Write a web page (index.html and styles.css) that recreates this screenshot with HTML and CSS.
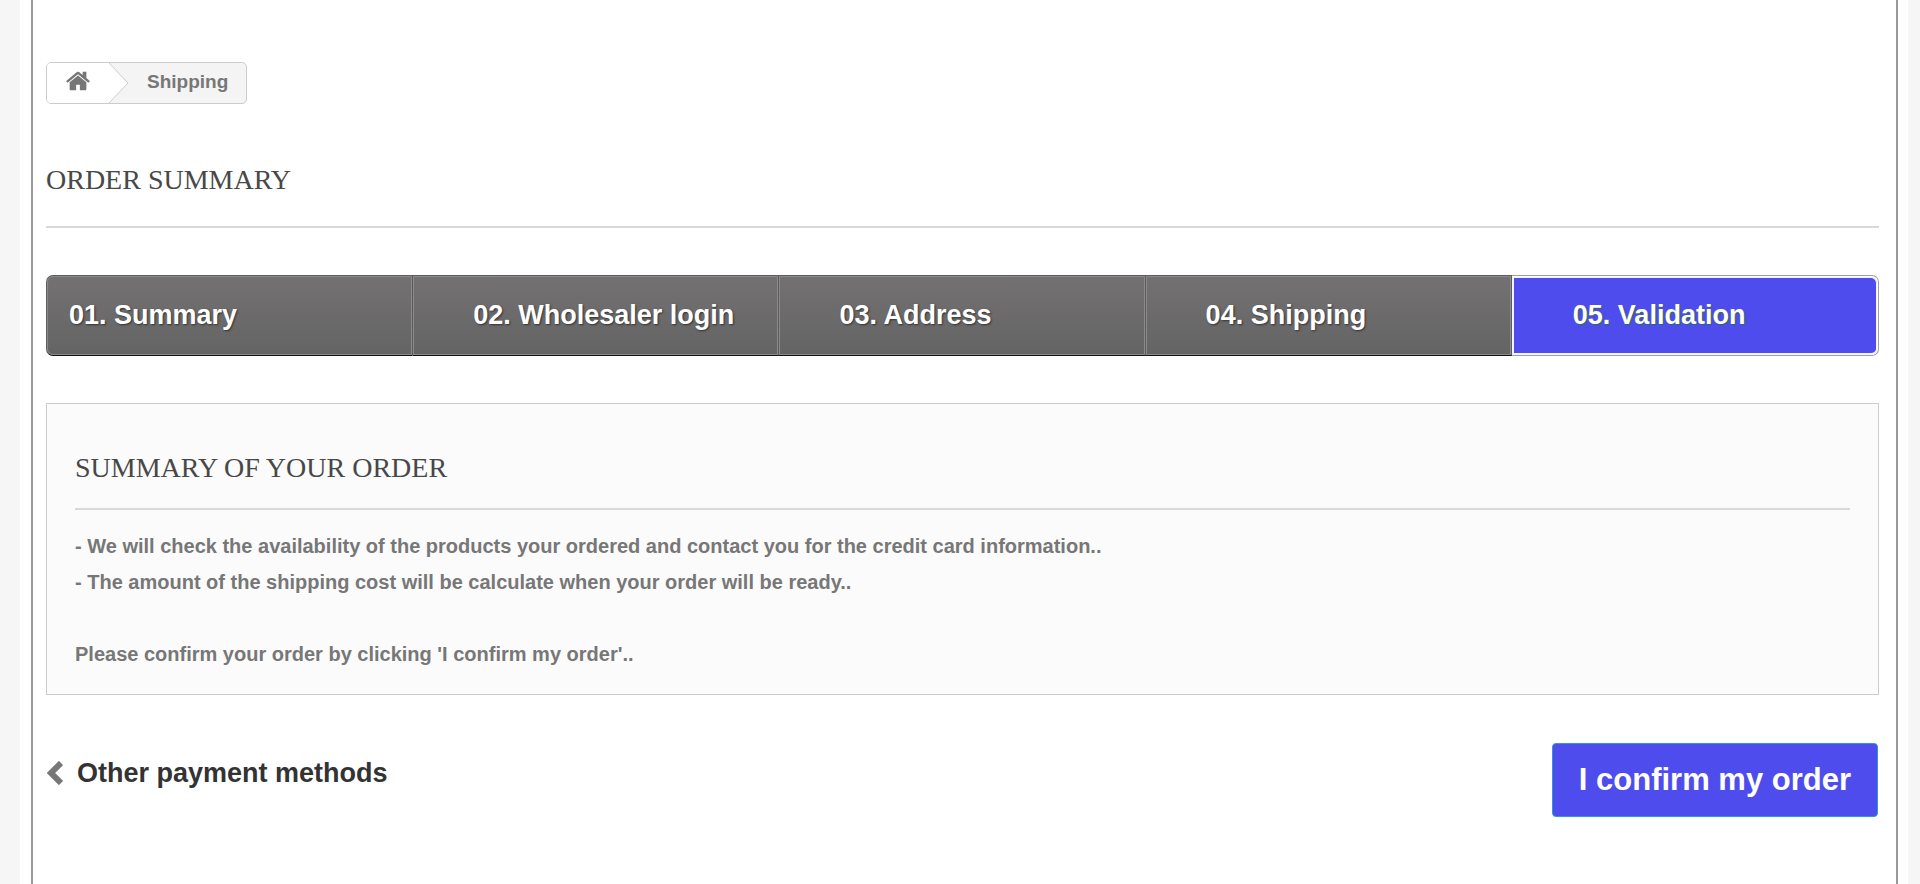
FILE: index.html
```
<!DOCTYPE html>
<html lang="en">
  <head>
    <meta charset="UTF-8" />
    <meta name="viewport" content="width=device-width, initial-scale=1.0" />
    <title>Order summary</title>
    <link rel="stylesheet" href="styles.css">
  </head>
  <body>
    <div class="page">
      <main class="columns">
        <nav class="breadcrumb" aria-label="Breadcrumb">
          <a class="home" href="/" aria-label="Home">
            <svg class="home-icon" viewBox="0 0 1792 1792" aria-hidden="true">
              <path d="M1472 992v480q0 26-19 45t-45 19h-384v-384h-256v384h-384q-26 0-45-19t-19-45v-480q0-1 .5-3t.5-3l575-474 575 474q1 2 1 6zm223-69l-62 74q-8 9-21 11h-3q-13 0-21-7l-692-577-692 577q-12 8-24 7-13-2-21-11l-62-74q-8-10-7-23.5t11-21.5l719-599q32-26 76-26t76 26l244 204v-195q0-14 9-23t23-9h192q14 0 23 9t9 23v408l219 182q10 8 11 21.5t-7 23.5z" />
            </svg>
          </a>
          <svg class="arrow" viewBox="0 0 20 40" aria-hidden="true">
            <path class="arrow-fill" d="M0 0L19 20L0 40z" />
            <path class="arrow-line" d="M0 0L19 20L0 40" />
          </svg>
          <span class="current">Shipping</span>
        </nav>

        <h1 class="page-heading">Order summary</h1>

        <ol class="steps">
          <li class="step"><a href="/order">01. Summary</a></li>
          <li class="step"><a href="/login">02. Wholesaler login</a></li>
          <li class="step"><a href="/order?step=1">03. Address</a></li>
          <li class="step"><a href="/order?step=2">04. Shipping</a></li>
          <li class="step current-step" aria-current="step"><span>05. Validation</span></li>
        </ol>

        <form action="/validation" method="post">
          <section class="box">
            <h2 class="page-subheading">Summary of your order</h2>
            <p>
              - We will check the availability of the products your ordered and contact you for the credit card information..
              <br />
              - The amount of the shipping cost will be calculate when your order will be ready..
            </p>
            <p>Please confirm your order by clicking 'I confirm my order'..</p>
          </section>

          <div class="cart-navigation">
            <a class="back" href="/order?step=3">
              <svg class="back-icon" viewBox="0 0 16 24" aria-hidden="true">
                <path d="M14 2L4 12L14 22" />
              </svg>
              Other payment methods
            </a>
            <button class="button" type="submit">I confirm my order</button>
          </div>
        </form>
      </main>
    </div>
  </body>
</html>
```

FILE: styles.css
```
* {
  box-sizing: border-box;
}
body {
  margin: 0;
  background: #f6f6f6;
  color: #777;
  font-family: "Liberation Sans", Arial, sans-serif;
  font-size: 20px;
  font-weight: bold;
  line-height: 36px;
}
a {
  color: inherit;
  text-decoration: none;
}
.page {
  min-height: 100vh;
  margin: 0 12px 0 20px;
  padding: 0 10px 0 11px;
  display: flex;
  background: #fff;
}
.columns {
  flex: 1;
  min-width: 0;
  padding: 62px 17px 40px 13px;
  border: solid #999;
  border-width: 0 2px;
}

/* breadcrumb */
.breadcrumb {
  display: inline-flex;
  height: 42px;
  overflow: hidden;
  border: 1px solid #ccc;
  border-radius: 5px;
  background: #f4f4f4;
  font-size: 19px;
  line-height: 38px;
  vertical-align: top;
}
.home {
  display: flex;
  padding: 5px 18px 0 18px;
  background: #fff;
}
.home-icon {
  width: 26px;
  height: 26px;
  fill: #777;
}
.arrow {
  width: 20px;
  height: 40px;
}
.arrow-fill {
  fill: #fff;
}
.arrow-line {
  fill: none;
  stroke: #ccc;
}
.current {
  padding: 0 18px;
}

/* headings */
.page-heading,
.page-subheading {
  margin: 0;
  border-bottom: 2px solid #d9d9d9;
  color: #484848;
  font-family: "Liberation Serif", serif;
  font-size: 28px;
  font-weight: normal;
  line-height: 32px;
  text-transform: uppercase;
}
.page-heading {
  margin: 60px 0 47px;
  padding-bottom: 30px;
}
.page-subheading {
  margin-bottom: 18px;
  padding-bottom: 24px;
}

/* order steps */
.steps {
  display: flex;
  margin: 0 0 47px;
  padding: 0;
  list-style: none;
  font-size: 27px;
  line-height: 76px;
}
.step {
  display: flex;
  flex: 1;
  border: solid #5c5c5c;
  border-width: 1px 1px 1px 0;
  border-bottom-color: #111;
  background: linear-gradient(#737171, #656464);
  color: #fff;
  text-shadow: 1px 1px 2px #333;
}
.step a,
.step span {
  flex: 1;
  padding-left: 59px;
  border: 1px solid #8b8a8a;
}
.step:first-child {
  border-left-width: 1px;
  border-radius: 7px 0 0 7px;
}
.step:first-child a {
  padding-left: 21px;
  border-radius: 6px 0 0 6px;
}
.current-step {
  padding: 1px 1px 0 0;
  border-width: 1px 1px 1px 0;
  border-color: #a0a0ac;
  border-radius: 0 7px 7px 0;
  background: #fff;
  line-height: 75px;
  text-shadow: 1px 1px 1px #287050;
}
.current-step span {
  border-width: 1px 1px 2px 2px;
  border-color: #f4f4fc;
  border-radius: 0 6px 6px 0;
  background: #4e4ced;
}

/* order box */
.box {
  padding: 48px 28px 22px;
  border: 1px solid #ccc;
  background: #fbfbfb;
}
.box p {
  margin: 0 0 36px;
}
.box p:last-child {
  margin-bottom: 0;
}

.cart-navigation {
  display: flex;
  justify-content: space-between;
  margin-top: 48px;
}
.back {
  display: flex;
  align-items: center;
  align-self: flex-start;
  gap: 14px;
  padding-top: 12px;
  color: #333;
  font-size: 27px;
}
.back-icon {
  width: 16px;
  height: 24px;
  margin-left: 1px;
  fill: none;
  stroke: #777;
  stroke-width: 6;
}
.button {
  margin-right: 1px;
  padding: 18px 26px;
  border: 1px solid #2f96dc;
  border-radius: 4px;
  background: #4e4ced;
  color: #fff;
  font: bold 31px/36px "Liberation Sans", Arial, sans-serif;
  cursor: pointer;
}
.button:hover {
  background: #3d3bdb;
}
```
